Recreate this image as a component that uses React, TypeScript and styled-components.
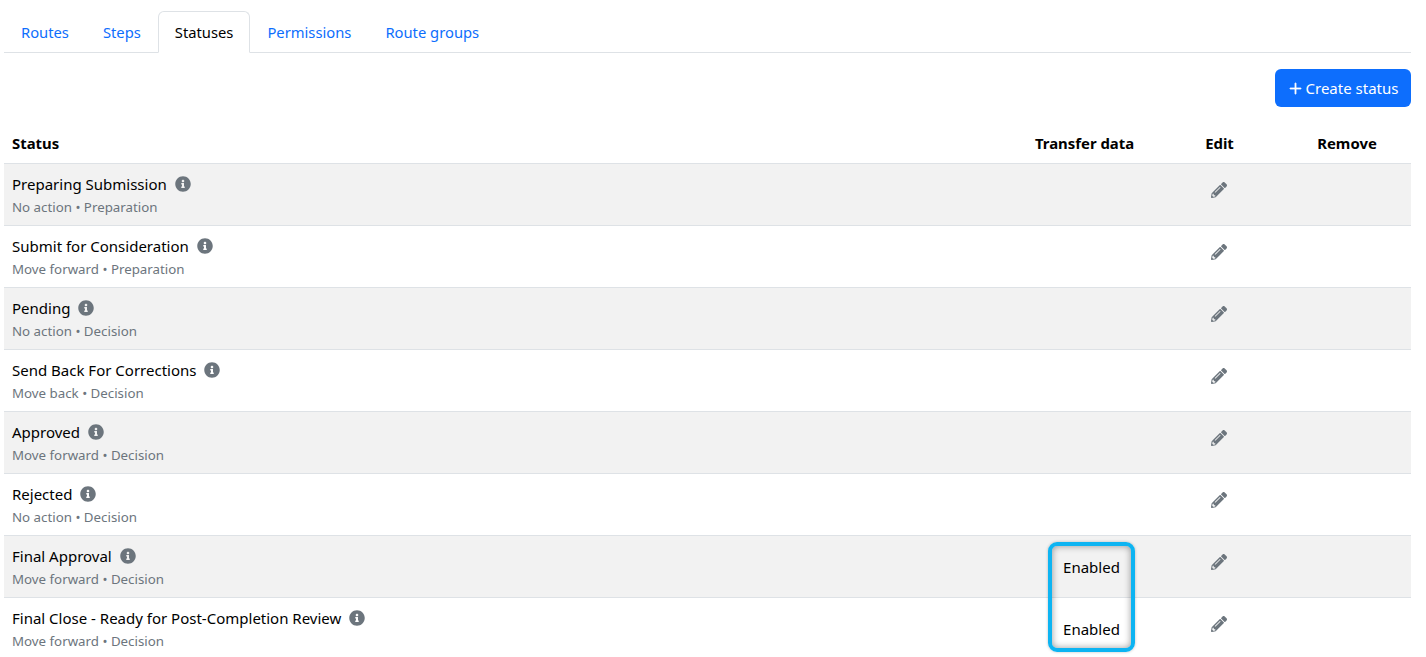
import React from "react";
import styled, { createGlobalStyle } from "styled-components";
import { FaInfoCircle, FaPencilAlt } from "react-icons/fa";
import { BsPlusLg } from "react-icons/bs";

const Global = createGlobalStyle`
  html, body { margin: 0; padding: 0; height: 657px; overflow: hidden; background: #fff; }
  body { font-family: "Noto Sans", "Open Sans", sans-serif; font-size: 15px; color: #000; }
`;

const Page = styled.div`
  position: relative;
  padding: 11px 15px 0 4px;
  height: 657px;
  box-sizing: border-box;
  overflow: hidden;
`;

const Tabs = styled.nav`
  display: flex;
  height: 42px;
  box-sizing: border-box;
  border-bottom: 1px solid #dee2e6;
`;

const Tab = styled.a<{ $active?: boolean }>`
  display: block;
  height: 42px;
  box-sizing: border-box;
  padding: 0 16px;
  font-size: 14.75px;
  line-height: 41px;
  color: ${(p) => (p.$active ? "#000" : "#0d6efd")};
  background: ${(p) => (p.$active ? "#fff" : "transparent")};
  border: 1px solid ${(p) => (p.$active ? "#dee2e6" : "transparent")};
  border-bottom-color: ${(p) => (p.$active ? "#fff" : "transparent")};
  border-radius: 6px 6px 0 0;
  white-space: nowrap;
`;

const Toolbar = styled.div`
  display: flex;
  justify-content: flex-end;
  padding: 16px 0 18px;
`;

const PrimaryButton = styled.button`
  display: flex;
  align-items: center;
  justify-content: center;
  gap: 3px;
  width: 136px;
  height: 38px;
  padding: 0;
  border: 0;
  border-radius: 6px;
  background: #0d6efd;
  color: #fff;
  font: inherit;
`;

const PlusIcon = styled(BsPlusLg)`
  width: 15px;
  height: 15px;
  stroke: currentColor;
  stroke-width: 0.9px;
`;

const Table = styled.table`
  width: 100%;
  table-layout: fixed;
  border-collapse: collapse;
`;

const TransferCol = styled.col`
  width: 129px;
`;

const EditCol = styled.col`
  width: 127px;
`;

const RemoveCol = styled.col`
  width: 128px;
`;

const HeadCell = styled.th<{ $center?: boolean }>`
  height: 38px;
  padding: 0 8px 2px;
  box-sizing: border-box;
  font-size: 14.9px;
  font-weight: 700;
  text-align: ${(p) => (p.$center ? "center" : "left")};
  border-bottom: 1px solid #dee2e6;
`;

const Row = styled.tr<{ $striped: boolean }>`
  background: ${(p) => (p.$striped ? "#f2f2f2" : "#fff")};
`;

const Cell = styled.td`
  height: 62px;
  padding: 8px;
  box-sizing: border-box;
  vertical-align: top;
  border-bottom: 1px solid #dee2e6;
`;

const StatusName = styled.div`
  display: flex;
  align-items: center;
  gap: 8px;
  height: 24px;
  color: #000;
`;

const Meta = styled.div`
  margin-top: 1px;
  font-size: 13.3px;
  line-height: 20px;
  color: #6c757d;
`;

const InfoIcon = styled(FaInfoCircle)`
  width: 16px;
  height: 16px;
  color: #6c757d;
`;

const PencilIcon = styled(FaPencilAlt)`
  display: block;
  width: 16px;
  height: 16px;
  margin: 10px 0 0 47px;
  color: #6c757d;
`;

const EnabledText = styled.div`
  margin-top: 11px;
  line-height: 24px;
  text-align: center;
`;

const Highlight = styled.div`
  position: absolute;
  left: 1048px;
  top: 542px;
  width: 87px;
  height: 110px;
  box-sizing: border-box;
  border: 4px solid #0db4f2;
  border-radius: 9px;
  box-shadow: inset 0 0 7px rgba(0, 0, 0, 0.4), 0 0 3px rgba(0, 0, 0, 0.25);
  pointer-events: none;
`;

const statuses = [
  { name: "Preparing Submission", meta: "No action • Preparation" },
  { name: "Submit for Consideration", meta: "Move forward • Preparation" },
  { name: "Pending", meta: "No action • Decision" },
  { name: "Send Back For Corrections", meta: "Move back • Decision" },
  { name: "Approved", meta: "Move forward • Decision" },
  { name: "Rejected", meta: "No action • Decision" },
  { name: "Final Approval", meta: "Move forward • Decision", enabled: true },
  { name: "Final Close - Ready for Post-Completion Review", meta: "Move forward • Decision", enabled: true },
];

const tabs = ["Routes", "Steps", "Statuses", "Permissions", "Route groups"];

export default function App() {
  return (
    <Page>
      <Global />
      <Tabs>
        {tabs.map((t) => (
          <Tab key={t} $active={t === "Statuses"}>{t}</Tab>
        ))}
      </Tabs>
      <Toolbar>
        <PrimaryButton>
          <PlusIcon />
          Create status
        </PrimaryButton>
      </Toolbar>
      <Table>
        <colgroup>
          <col />
          <TransferCol />
          <EditCol />
          <RemoveCol />
        </colgroup>
        <thead>
          <tr>
            <HeadCell>Status</HeadCell>
            <HeadCell>Transfer data</HeadCell>
            <HeadCell $center>Edit</HeadCell>
            <HeadCell $center>Remove</HeadCell>
          </tr>
        </thead>
        <tbody>
          {statuses.map((s, i) => (
            <Row key={s.name} $striped={i % 2 === 0}>
              <Cell>
                <StatusName>{s.name}<InfoIcon /></StatusName>
                <Meta>{s.meta}</Meta>
              </Cell>
              <Cell>{s.enabled && <EnabledText>Enabled</EnabledText>}</Cell>
              <Cell><PencilIcon /></Cell>
              <Cell />
            </Row>
          ))}
        </tbody>
      </Table>
      <Highlight />
    </Page>
  );
}
